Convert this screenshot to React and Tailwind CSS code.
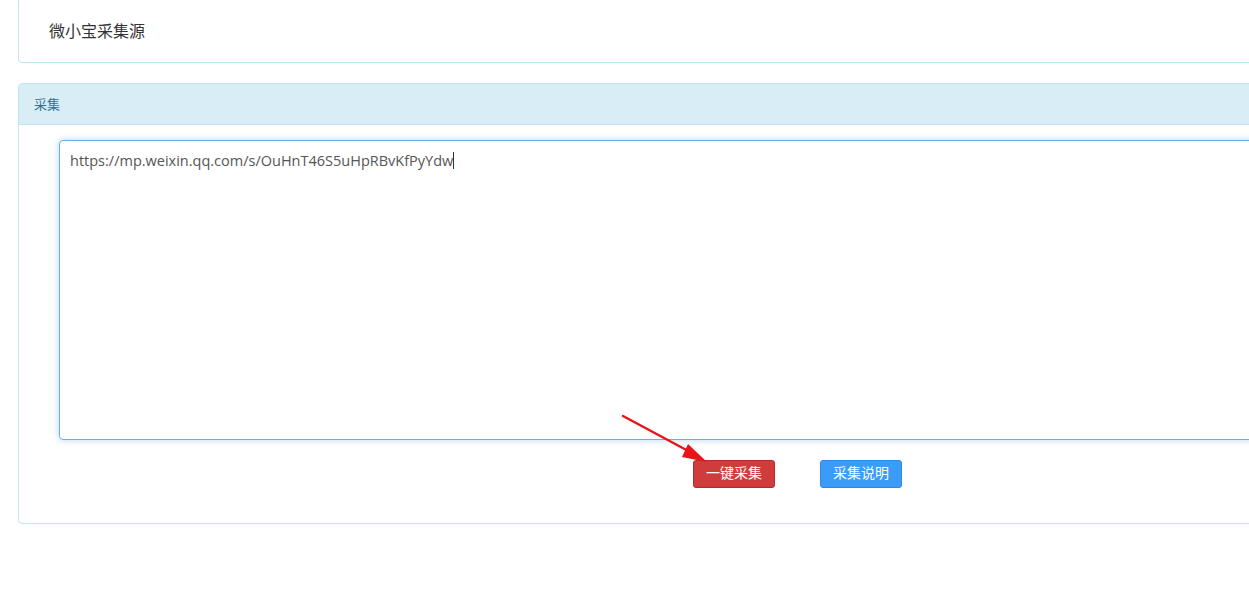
import React from 'react'

const cjk = '"Noto Sans CJK SC", "Noto Sans", sans-serif'

const App = () => {
  return (
    <div className="relative w-[1249px] h-[606px] overflow-hidden bg-white" style={{ fontFamily: cjk }}>
      {/* Source panel */}
      <div className="ml-[18px] -mt-[2px] w-[1300px] h-[65px] border border-[#bce8f1] rounded-[4px] bg-white flex items-center pl-[30px] pb-[2px]">
        <span className="text-[16px] text-[#333]">微小宝采集源</span>
      </div>

      {/* Collect panel */}
      <div className="ml-[18px] mt-[20px] w-[1300px] border border-[#bce8f1] rounded-[4px] bg-white">
        <div className="h-[41px] bg-[#d9edf7] border-b border-[#bce8f1] flex items-center px-[15px]">
          <span className="text-[13px] text-[#31708f]">采集</span>
        </div>
        <div className="pl-[40px] pt-[15px] pb-[35px]">
          <div className="w-[1260px] h-[300px] border border-[#66afe9] rounded-[4px] shadow-[0_0_6px_rgba(102,175,233,0.5)] px-[10px] pt-[6px]">
            <span className="text-[14.5px] text-[#555]" style={{ fontFamily: '"Open Sans", "Noto Sans", sans-serif' }}>
              https://mp.weixin.qq.com/s/OuHnT46S5uHpRBvKfPyYdw
            </span>
            <span className="inline-block w-px h-[17px] bg-[#333] align-middle -mt-[2px]" />
          </div>
          <div className="flex mt-[20px] pl-[634px] gap-[45px]">
            <button className="w-[82px] h-[28px] bg-[#d03c3c] border border-[#b52b2b] rounded-[3px] text-white text-[14px] leading-none pb-[4px]">
              一键采集
            </button>
            <button className="w-[82px] h-[28px] bg-[#3a9cf6] border border-[#2a8be6] rounded-[3px] text-white text-[14px] leading-none pb-[4px]">
              采集说明
            </button>
          </div>
        </div>
      </div>

      {/* Annotation arrow */}
      <svg className="absolute left-0 top-0 pointer-events-none" width="1249" height="606">
        <line x1="623" y1="416" x2="692" y2="453" stroke="#e8141a" strokeWidth="2.5" strokeLinecap="round" />
        <polygon points="707,462 688,444 682,457" fill="#e8141a" />
      </svg>
    </div>
  )
}

export default App
